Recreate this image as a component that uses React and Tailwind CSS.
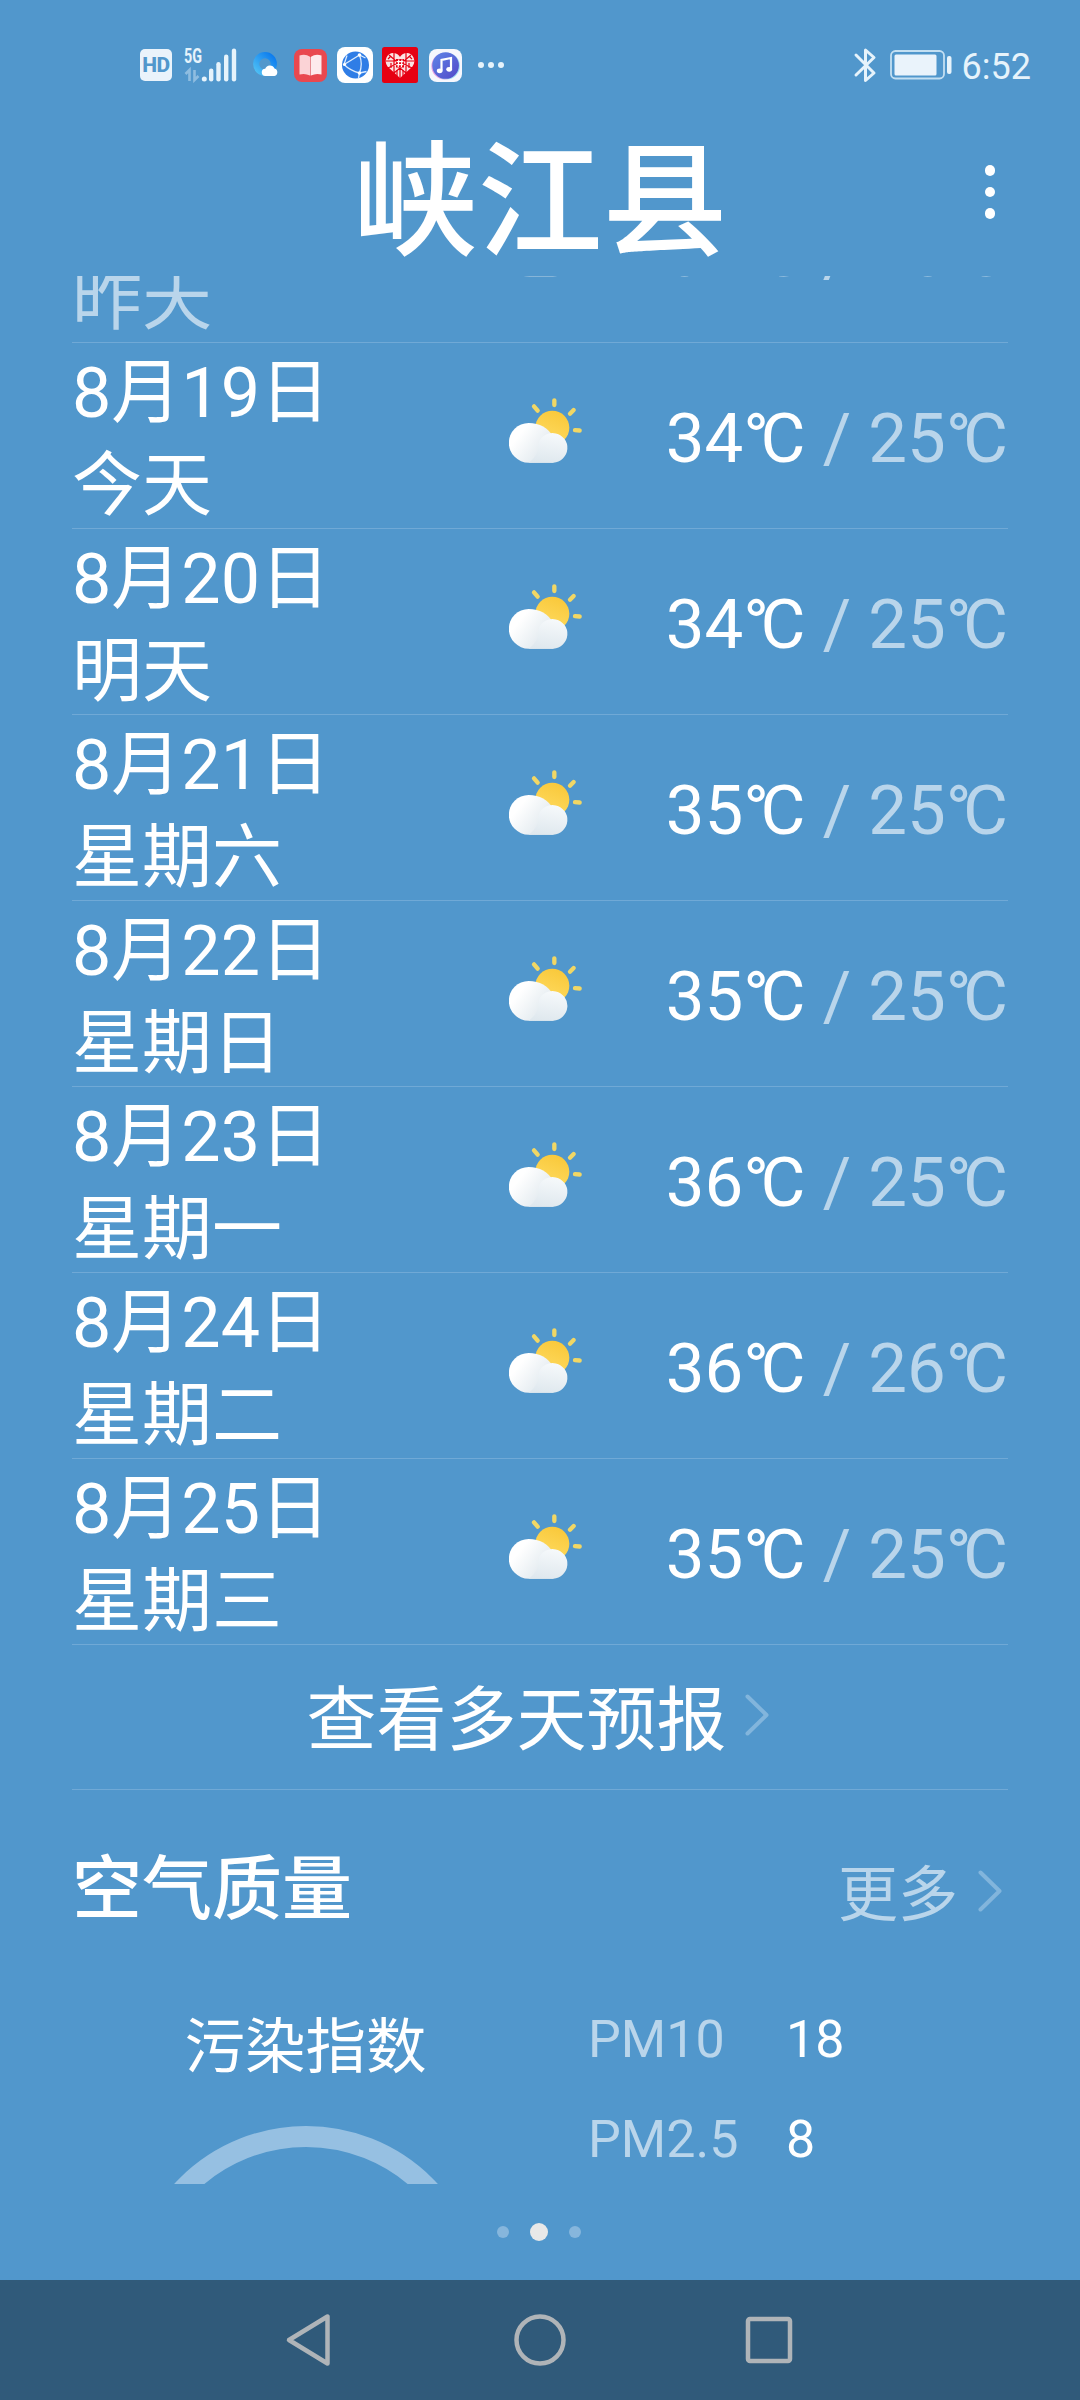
const forecast = [
  { day: '昨天', high: 34, low: 25, past: true },
  { date: '8月19日', day: '今天', high: 34, low: 25 },
  { date: '8月20日', day: '明天', high: 34, low: 25 },
  { date: '8月21日', day: '星期六', high: 35, low: 25 },
  { date: '8月22日', day: '星期日', high: 35, low: 25 },
  { date: '8月23日', day: '星期一', high: 36, low: 25 },
  { date: '8月24日', day: '星期二', high: 36, low: 26 },
  { date: '8月25日', day: '星期三', high: 35, low: 25 },
]

const pollutants = [
  { name: 'PM10', value: 18 },
  { name: 'PM2.5', value: 8 },
]

function SignalIcon() {
  return (
    <svg width="54" height="36" viewBox="0 0 54 36" fill="#e6f3fb">
      <text x="0" y="15.5" fontSize="20" fontWeight="700" textLength="18" lengthAdjust="spacingAndGlyphs">5G</text>
      <g stroke="#8fbde0" strokeWidth="2.6" fill="none">
        <path d="M1.5 27l4-4v11" />
        <path d="M10.5 23v10l4-4" />
      </g>
      <circle cx="20.3" cy="32" r="2.5" />
      <rect x="25" y="21.5" width="4.4" height="13" rx="2.2" />
      <rect x="32.3" y="15" width="4.4" height="19.5" rx="2.2" />
      <rect x="40" y="7.5" width="4.4" height="27" rx="2.2" />
      <rect x="47.8" y="1.5" width="4.4" height="33" rx="2.2" />
    </svg>
  )
}

function CloudRingIcon() {
  return (
    <svg width="26" height="26" viewBox="0 0 26 26">
      <defs>
        <linearGradient id="ring" x1="0" y1="1" x2="1" y2="0">
          <stop offset="0" stopColor="#4fc0f5" />
          <stop offset="1" stopColor="#0a7aee" />
        </linearGradient>
      </defs>
      <circle cx="12" cy="12" r="8.8" fill="none" stroke="url(#ring)" strokeWidth="6.2" />
      <path d="M12.5 24a3.6 3.6 0 0 1-.3-7.2 5 5 0 0 1 9.3-.3A3.9 3.9 0 0 1 21.5 24z" fill="#fff" />
    </svg>
  )
}

function BookIcon() {
  return (
    <svg width="33" height="33" viewBox="0 0 33 33">
      <rect width="33" height="33" rx="8" fill="#e9484f" />
      <path d="M5.5 6.5q6-2 10.5 1.3v18.7q-5-2.6-10.5-1z" fill="#fbd3d6" />
      <path d="M27.5 6.5q-6-2-10.5 1.3v18.7q5-2.6 10.5-1z" fill="#fdeaec" />
      <path d="M16.5 8v18.5" stroke="#e58a90" strokeWidth="1" />
    </svg>
  )
}

function GlobeIcon() {
  return (
    <svg width="36" height="36" viewBox="0 0 36 36">
      <rect width="36" height="36" rx="8" fill="#fff" />
      <circle cx="18.500" cy="18" r="13.500" fill="#2f7de6" />
      <g fill="none" stroke="#dcebfd" strokeWidth="1.300">
        <path d="M7 17.500Q13 14 22.500 8" />
        <path d="M7 17.500Q13 23.500 22.500 26" />
        <path d="M22.500 8Q26 17 22.500 26" />
        <path d="M22.500 8l6 3M7 17.500l3-9M22.500 26l-1 5M22.500 26l7-1.500" />
      </g>
      <g fill="#fff">
        <circle cx="22.500" cy="8" r="1.800" />
        <circle cx="7.500" cy="17.500" r="1.600" />
        <circle cx="22.500" cy="26" r="1.800" />
      </g>
    </svg>
  )
}

function HeartIcon() {
  return (
    <svg width="36" height="36" viewBox="0 0 36 36">
      <rect width="36" height="36" rx="2.500" fill="#e60012" />
      <path d="M18 31L5.500 19.500Q2.500 15.500 4.500 10.500Q7 5.500 12 6Q16 6.500 18 10Q20 6.500 24 6Q29 5.500 31.500 10.500Q33.500 15.500 30.500 19.500z" fill="#fbe3e3" />
      <g stroke="#e60012" strokeWidth="1.200" fill="none">
        <path d="M12 6v22M24 6v22M4 14h10M22 14h10M6 21l8-4M30 21l-8-4M18 21v10M7 8l7 6M29 8l-7 6M12 26l6-5 6 5" />
        <path d="M9 9l-3 3M27 9l3 3M9 16v5M27 16v5M15 23v6M21 23v6" />
      </g>
      <rect x="14" y="12" width="8" height="8.500" fill="#e60012" />
      <path d="M16.800 12.500l-.6 7.500M20 12.500l-.6 7.500M14.500 14.700h7M14.300 17.700h7" stroke="#fff" strokeWidth="1.200" />
    </svg>
  )
}

function MusicIcon() {
  return (
    <svg width="33" height="33" viewBox="0 0 33 33">
      <defs>
        <linearGradient id="music" x1="0" y1="0" x2="1" y2="1">
          <stop offset="0" stopColor="#5e86e8" />
          <stop offset="1" stopColor="#5348c8" />
        </linearGradient>
      </defs>
      <rect width="33" height="33" rx="8" fill="#f6f7fd" />
      <circle cx="15.700" cy="17.200" r="13.300" fill="#e79fe0" />
      <circle cx="17.600" cy="17" r="13.300" fill="#9fdcf3" />
      <circle cx="16.600" cy="16.500" r="13.300" fill="url(#music)" />
      <path d="M12.500 21.500V11l9.500-2v11" fill="none" stroke="#fff" strokeWidth="2.200" />
      <ellipse cx="10.700" cy="21.800" rx="2.900" ry="2.400" fill="#fff" />
      <ellipse cx="20.200" cy="20.300" rx="2.900" ry="2.400" fill="#fff" />
    </svg>
  )
}

function StatusBar() {
  return (
    <div className="flex h-[130px] items-start justify-between pl-[140px] pr-[49px] pt-[47px]">
      <div className="flex h-9 items-center">
        <div className="flex h-8 w-8 items-center justify-center rounded-[5px] bg-[#eaf3fb] text-[21px] font-extrabold leading-8 tracking-[-0.5px] text-[#5197cc]">
          HD
        </div>
        <div className="ml-3">
          <SignalIcon />
        </div>
        <div className="ml-[15px]">
          <CloudRingIcon />
        </div>
        <div className="ml-[15px]">
          <BookIcon />
        </div>
        <div className="ml-[10px]">
          <GlobeIcon />
        </div>
        <div className="ml-[9px]">
          <HeartIcon />
        </div>
        <div className="ml-[11px]">
          <MusicIcon />
        </div>
        <div className="ml-4 flex gap-[4.500px]">
          <span className="size-[5.500px] rounded-full bg-[#e6f3fb]" />
          <span className="size-[5.500px] rounded-full bg-[#e6f3fb]" />
          <span className="size-[5.500px] rounded-full bg-[#e6f3fb]" />
        </div>
      </div>
      <div className="flex h-9 items-center">
        <svg width="24" height="36" viewBox="0 0 24 36" fill="none" stroke="#e6f3fb" strokeWidth="3" strokeLinecap="round" strokeLinejoin="round">
          <path d="M3 8l18 18-8.500 7.500V3L21 10.500 3 28" />
        </svg>
        <svg className="ml-[13px]" width="64" height="30" viewBox="0 0 64 30">
          <rect x="1" y="1" width="53" height="27.500" rx="4.500" fill="none" stroke="#c3dff2" strokeWidth="1.800" />
          <rect x="4.500" y="4.500" width="42" height="21" rx="1.500" fill="#eaf3fb" />
          <rect x="57" y="6" width="4.500" height="18" rx="2" fill="#e6f3fb" />
        </svg>
        <span className="ml-2 pt-[3px] text-[36px] leading-9 text-[#e6f3fb]">6:52</span>
      </div>
    </div>
  )
}

function PartlyCloudyIcon() {
  return (
    <svg width="73" height="65" viewBox="87 83 219 195">
      <defs>
        <linearGradient id="sun" x1="0.700" y1="0" x2="0.300" y2="1">
          <stop offset="0" stopColor="#f9c83a" />
          <stop offset="1" stopColor="#ffdc62" />
        </linearGradient>
        <linearGradient id="cloudBack" x1="0" y1="0" x2="1" y2="0.700">
          <stop offset="0.300" stopColor="#ffffff" />
          <stop offset="1" stopColor="#dde6ec" />
        </linearGradient>
        <linearGradient id="cloudFront" x1="0.600" y1="0" x2="0.400" y2="1">
          <stop offset="0" stopColor="#f6f9fb" />
          <stop offset="1" stopColor="#dfe8ee" />
        </linearGradient>
      </defs>
      <circle cx="217" cy="172" r="51" fill="url(#sun)" />
      <g stroke="#f1d765" strokeWidth="13" strokeLinecap="round">
        <path d="M223 90v14M162 108l11 13M281 119l-11 11M285 179.500l14 1" />
      </g>
      <path d="M146 158a59.500 59.500 0 0 0 0 119h74V200Q196 158 146 158z" fill="url(#cloudBack)" />
      <path d="M146 277a70 70 0 0 0 30-60a44.500 44.500 0 1 1 44 60z" fill="url(#cloudFront)" />
    </svg>
  )
}

function Degrees({ value }) {
  return (
    <>
      {value}
      <span className="tracking-[-8.5px]">°</span>C
    </>
  )
}

function ForecastRow({ date, day, high, low, past }) {
  return (
    <li className={`flex h-[186px] shrink-0 items-center border-b border-[#70a9d6] text-[70px] ${past ? 'text-white/60' : 'text-white'}`}>
      <div className="w-[437px] pt-2 leading-[93px]">
        <div className="h-[93px]">{date}</div>
        <div>{day}</div>
      </div>
      <div className={`mb-[11px] ${past ? 'opacity-40' : ''}`}>
        <PartlyCloudyIcon />
      </div>
      <div className="flex-1 whitespace-nowrap pt-[7px] text-right text-[69px] leading-[104px]">
        <Degrees value={high} />
        <span className={past ? '' : 'text-white/60'}>
          {' / '}
          <Degrees value={low} />
        </span>
      </div>
    </li>
  )
}

function Chevron() {
  return (
    <svg width="24" height="42" viewBox="0 0 24 42" fill="none" stroke="#82b5dc" strokeWidth="4" strokeLinecap="round" strokeLinejoin="round">
      <path d="M2.500 2.500L21.500 21 2.500 39.500" />
    </svg>
  )
}

function AirQuality() {
  return (
    <section>
      <div className="flex h-[189px] items-center justify-between pr-[6px]">
        <h2 className="pt-[10px] text-[70px] font-medium leading-[84px]">空气质量</h2>
        <div className="flex items-center pt-[13px]">
          <span className="pt-[10px] text-[60px] leading-[72px] text-white/60">更多</span>
          <div className="ml-5">
            <Chevron />
          </div>
        </div>
      </div>
      <div className="flex">
        <div className="flex w-[467px] flex-col items-center pt-[34px]">
          <div className="text-[60.5px] leading-[70px]">污染指数</div>
          <svg className="mt-[43px]" width="358" height="358" viewBox="0 0 358 358">
            <circle cx="179" cy="179" r="168.500" fill="none" stroke="#96c0e2" strokeWidth="21" />
          </svg>
        </div>
        <div className="ml-[49px] pt-[11px]">
          {pollutants.map((p) => (
            <div key={p.name} className="flex h-[100px] items-center text-[52px]">
              <span className="w-[198px] text-white/60">{p.name}</span>
              <span>{p.value}</span>
            </div>
          ))}
        </div>
      </div>
    </section>
  )
}

function NavBar() {
  return (
    <nav className="flex h-[120px] items-center justify-center gap-[174px] bg-[#305a7a]">
      <svg width="56" height="56" viewBox="0 0 56 56" fill="none" stroke="#afb4b8" strokeWidth="4.500" strokeLinejoin="round">
        <path d="M7 28L45.500 4.500v47z" />
      </svg>
      <svg width="56" height="56" viewBox="0 0 56 56" fill="none" stroke="#afb4b8" strokeWidth="4.500">
        <circle cx="28" cy="28" r="23.500" />
      </svg>
      <svg width="56" height="56" viewBox="0 0 56 56" fill="none" stroke="#afb4b8" strokeWidth="4.500">
        <rect x="6" y="7" width="42" height="42" rx="2" />
      </svg>
    </nav>
  )
}

export default function App() {
  return (
    <div className="flex h-[2400px] w-[1080px] flex-col overflow-hidden bg-[#5197cc] font-[Roboto,'Noto_Sans_CJK_SC',sans-serif] text-white">
      <StatusBar />
      <header className="grid h-[146px] grid-cols-[1fr_auto_1fr] items-start">
        <h1 className="col-start-2 pt-[6px] text-[125px] font-medium leading-[136px]">峡江县</h1>
        <div className="mr-[85px] mt-[35px] flex flex-col gap-[11px] justify-self-end">
          <span className="size-[10.500px] rounded-full bg-white" />
          <span className="size-[10.500px] rounded-full bg-white" />
          <span className="size-[10.500px] rounded-full bg-white" />
        </div>
      </header>

      <main className="flex h-[1908px] flex-col justify-start overflow-hidden px-[72px]">
        <ul className="-mt-[119px] flex flex-col">
          {forecast.map((item) => (
            <ForecastRow key={item.day} {...item} />
          ))}
        </ul>
        <div className="flex h-[145px] shrink-0 items-center justify-center border-b border-[#70a9d6] pr-[5px]">
          <span className="pt-[7px] text-[70px] leading-[84px]">查看多天预报</span>
          <div className="mb-1 ml-[18px]">
            <Chevron />
          </div>
        </div>
        <AirQuality />
      </main>

      <div className="flex h-24 items-center justify-center gap-[21px] pr-[3px]">
        <span className="size-3 rounded-full bg-[#86b6dc]" />
        <span className="size-[18px] rounded-full bg-[#e8e8e8]" />
        <span className="size-3 rounded-full bg-[#86b6dc]" />
      </div>
      <NavBar />
    </div>
  )
}
